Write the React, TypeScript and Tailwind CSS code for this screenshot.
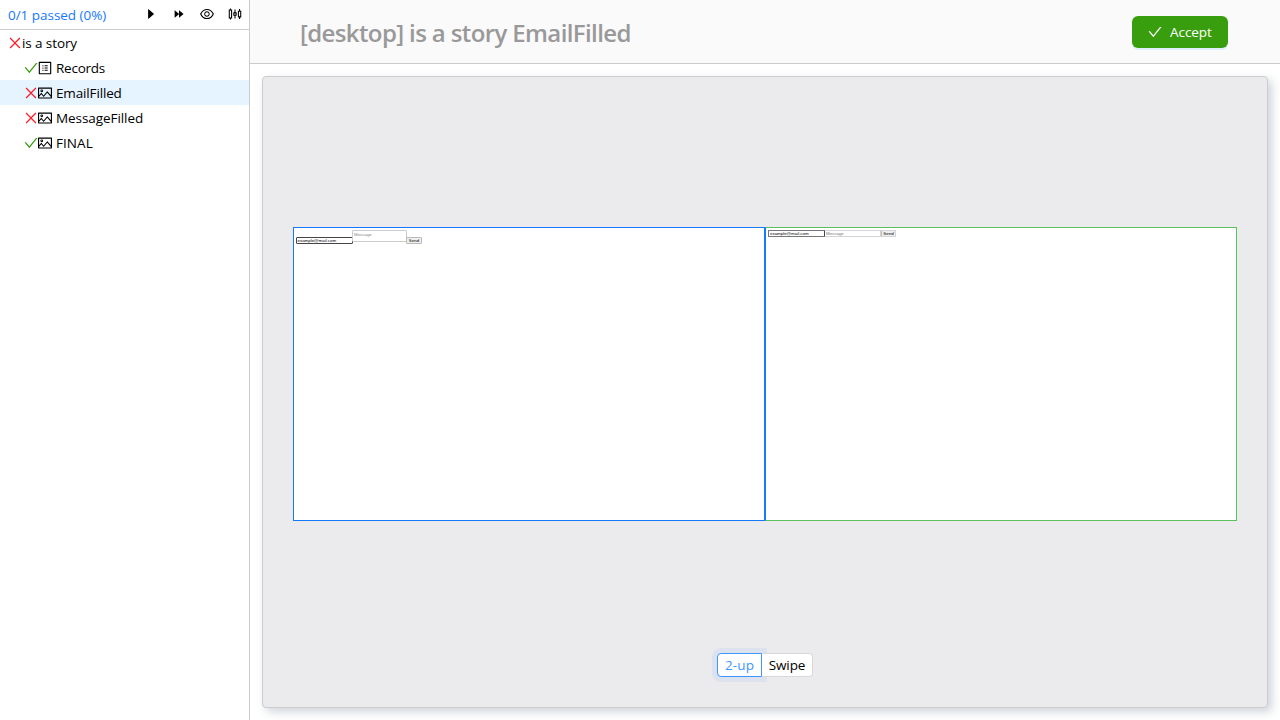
import {
  AiFillForward,
  AiOutlineCaretRight,
  AiOutlineCheck,
  AiOutlineClose,
  AiOutlineEye,
  AiOutlinePicture,
  AiOutlineProfile,
  AiOutlineSliders,
} from "react-icons/ai";

type Item = { name: string; passed: boolean; kind: "record" | "image"; tracking: string; selected?: boolean };

const items: Item[] = [
  { name: "Records", passed: true, kind: "record", tracking: "tracking-[-0.24px]" },
  { name: "EmailFilled", passed: false, kind: "image", tracking: "tracking-[-0.15px]", selected: true },
  { name: "MessageFilled", passed: false, kind: "image", tracking: "tracking-[-0.07px]" },
  { name: "FINAL", passed: true, kind: "image", tracking: "tracking-[0.05px]" },
];

function Status({ passed }: { passed: boolean }) {
  return passed ? (
    <AiOutlineCheck className="-m-px size-4 shrink-0 text-[#389e0d]" />
  ) : (
    <AiOutlineClose className="-m-px size-4 shrink-0 text-[#f5222d]" />
  );
}

function Sidebar() {
  return (
    <aside className="flex w-[250px] shrink-0 flex-col border-r border-[#cccccc] bg-white">
      <div className="flex h-[30px] items-center border-b border-[#cccccc] pr-[7px] pl-2">
        <span className="grow whitespace-nowrap tracking-[-0.03px] text-[#1677ff]">0/1 passed (0%)</span>
        <div className="flex items-center gap-3.5 pb-px">
          <AiOutlineCaretRight className="size-3.5" />
          <AiFillForward className="size-3.5" />
          <AiOutlineEye className="-m-px size-4" />
          <AiOutlineSliders className="-m-px size-4" />
        </div>
      </div>
      <div className="flex h-[25px] items-center pt-px pl-2">
        <Status passed={false} />
        <span className="tracking-[-0.1px]">is a story</span>
      </div>
      {items.map((item) => (
        <div
          key={item.name}
          className={item.selected ? "flex h-[25px] items-center bg-[#e6f4ff] pt-px pl-6" : "flex h-[25px] items-center pt-px pl-6"}
        >
          <Status passed={item.passed} />
          {item.kind === "record" ? (
            <AiOutlineProfile className="-m-px size-4 shrink-0" />
          ) : (
            <AiOutlinePicture className="-m-px size-4 shrink-0" />
          )}
          <span className={`ml-1 ${item.tracking}`}>{item.name}</span>
        </div>
      ))}
    </aside>
  );
}

function ExpectedShot() {
  return (
    <div className="h-[294px] w-[472px] border border-[#1677ff] bg-white pt-[2px] pl-[2px] font-['Liberation_Sans',sans-serif] text-[4.4px] whitespace-nowrap">
      <div className="flex items-start">
        <div className="mt-[7px] h-[7px] w-[57px] rounded-[1px] border border-[#444] pl-[0.5px] leading-[5px] text-black">
          example@mail.com
        </div>
        <div className="-ml-px h-[12px] w-[55px] rounded-[1px] border border-[#ccc] pl-px leading-[7px] text-[#888]">Message</div>
        <div className="-ml-px mt-[7px] h-[7px] w-[16px] rounded-[1px] border border-[#bbb] bg-[#efefef] text-center leading-[5px] text-black">
          Send
        </div>
      </div>
    </div>
  );
}

function ActualShot() {
  return (
    <div className="h-[294px] w-[472px] border border-[#5cc05c] border-l-[#1677ff] bg-white pt-[2px] pl-[2px] font-['Liberation_Sans',sans-serif] text-[4.4px] whitespace-nowrap">
      <div className="flex items-start">
        <div className="h-[7px] w-[57px] rounded-[1px] border border-[#777] border-r-[#444] pl-px leading-[5px] text-black">
          example@mail.com
        </div>
        <div className="h-[7px] w-[56px] border border-l-0 border-[#d4d4d4] pl-px leading-[5px] text-[#777]">Message</div>
        <div className="h-[7px] w-[15px] rounded-[1px] border border-[#d4d4d4] border-l-[#bbb] bg-[#efefef] text-center leading-[5px] text-black">
          Send
        </div>
      </div>
    </div>
  );
}

export default function App() {
  return (
    <div className="flex h-screen w-screen overflow-hidden bg-white font-['Open_Sans','Noto_Sans',sans-serif] text-[13.5px] leading-[22px] text-black">
      <Sidebar />
      <main className="flex min-w-0 grow flex-col">
        <header className="flex h-16 shrink-0 items-center justify-between border-b border-[#cccccc] bg-[#fafafa] pr-[52px] pl-[50px]">
          <h1 className="pt-0.5 text-[24px] leading-8 font-semibold tracking-[-0.62px] whitespace-nowrap text-[#999999]">
            [desktop] is a story EmailFilled
          </h1>
          <button className="flex h-8 w-24 items-center gap-2 rounded-md bg-[#389e0d] pl-4 text-white shadow-[0_2px_0_rgba(5,145,255,0.1)]">
            <AiOutlineCheck className="-m-px size-4 shrink-0" />
            <span className="tracking-[-0.05px]">Accept</span>
          </button>
        </header>
        <div className="grow p-3">
          <section className="flex h-full flex-col items-center rounded border border-[#cccccc] bg-[#ebebed] pt-[150px] shadow-[4px_4px_10px_rgba(100,120,140,0.3)]">
            <div className="flex">
              <ExpectedShot />
              <ActualShot />
            </div>
            <div className="mt-[132px] flex h-6">
              <button className="z-10 h-6 w-[45px] rounded-l border border-[#4096ff] bg-white tracking-[0.1px] text-[#4096ff] shadow-[0_0_0_5px_rgba(22,105,255,0.065)]">
                2-up
              </button>
              <button className="z-20 h-6 w-[51px] rounded-r border border-l-0 border-[#d9d9d9] bg-white tracking-[-0.1px]">
                Swipe
              </button>
            </div>
          </section>
        </div>
      </main>
    </div>
  );
}
